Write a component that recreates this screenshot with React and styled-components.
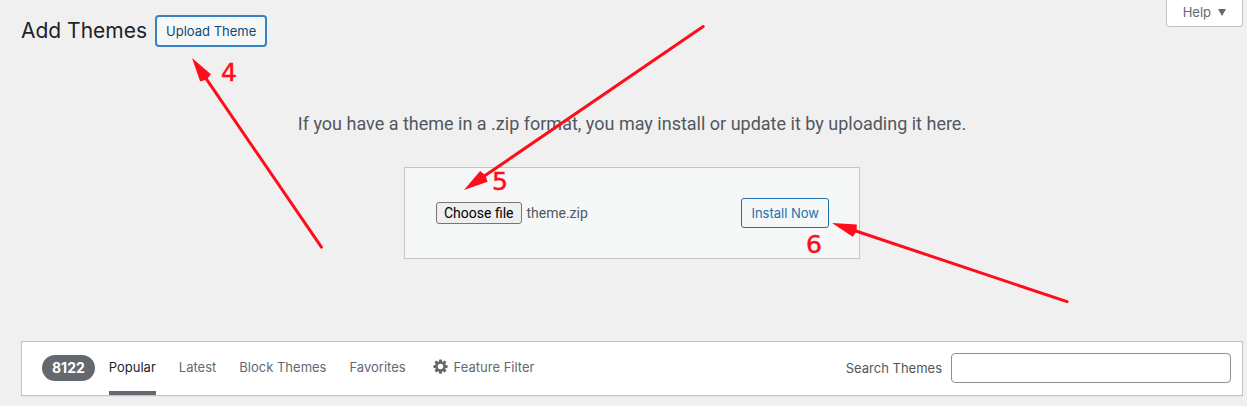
import React, { useRef, useState } from "react";
import styled, { createGlobalStyle, css } from "styled-components";

const GlobalStyle = createGlobalStyle`
  *, *::before, *::after { box-sizing: border-box; }
  body {
    margin: 0;
    background: #f0f0f1;
    color: #50575e;
    font-family: Inter, "Liberation Sans", sans-serif;
    font-size: 13px;
    line-height: 20px;
  }
  button, input { font: inherit; }
`;

const Page = styled.main`
  padding: 0 4px 10px 21px;
`;

const TopBar = styled.header`
  display: flex;
  justify-content: space-between;
  align-items: flex-start;
`;

const TitleRow = styled.div`
  display: flex;
  align-items: center;
  gap: 8px;
  padding-top: 15px;
`;

const Title = styled.h1`
  margin: 0;
  color: #1d2327;
  font-size: 21px;
  font-weight: 400;
  line-height: 32px;
`;

const HelpButton = styled.button`
  display: flex;
  align-items: center;
  gap: 7px;
  height: 27px;
  padding: 0 16px 2px;
  border: 1px solid #c3c4c7;
  border-top: 0;
  border-radius: 0 0 4px 4px;
  background: #fff;
  color: #646970;
`;

const Caret = styled.span`
  border: 4px solid transparent;
  border-top: 7px solid #646970;
  border-bottom: 0;
`;

const ActionButton = styled.button`
  height: 30px;
  padding: 0 9px;
  border: 1px solid #2271b1;
  border-radius: 3px;
  background: #f6f7f7;
  color: #2271b1;
  white-space: nowrap;
  ${(p) =>
    p.$active &&
    css`
      height: 32px;
      border: 2px solid #3582c4;
      border-radius: 4px;
      color: #0a4b78;
    `}
`;

const Anchor = styled.div`
  position: relative;
  display: flex;
`;

const CalloutArt = styled.svg`
  position: absolute;
  z-index: 1;
  top: ${(p) => p.$top}px;
  left: ${(p) => p.$left}px;
  overflow: visible;
  pointer-events: none;
  fill: #ff0d1b;
  stroke: #ff0d1b;
  line {
    stroke-width: 3px;
    stroke-linecap: round;
  }
  polygon { stroke: none; }
  text {
    stroke-width: 0.5;
    font-family: "DejaVu Sans", sans-serif;
    font-size: 25px;
  }
`;

const UploadPanel = styled.section`
  display: flex;
  flex-direction: column;
  align-items: center;
  padding: 64px 0 82px;
`;

const Message = styled.p`
  margin: 0;
  font-family: Roboto, "Liberation Sans", sans-serif;
  font-size: 18px;
  line-height: 26px;
  text-align: center;
`;

const UploadForm = styled.form`
  display: flex;
  align-items: center;
  justify-content: space-between;
  width: 100%;
  max-width: 456px;
  margin-top: 30px;
  padding: 30px 30px 30px 31px;
  border: 1px solid #c3c4c7;
  background: #f6f7f7;
`;

const FilePicker = styled.div`
  display: flex;
  align-items: center;
  gap: 5px;
  font-family: Roboto, "Liberation Sans", sans-serif;
  font-size: 14px;
`;

const FileButton = styled.button`
  height: 22px;
  padding: 0 7px;
  border: 1px solid #767676;
  border-radius: 3px;
  background: #efefef;
  color: #000;
  line-height: 20px;
`;

const FilterBar = styled.div`
  display: flex;
  align-items: center;
  justify-content: space-between;
  height: 55px;
  padding: 0 11px 0 20px;
  border: 1px solid #c3c4c7;
  background: #fff;
  box-shadow: 0 1px 1px rgba(0, 0, 0, 0.04);
`;

const Filters = styled.nav`
  display: flex;
  align-items: center;
  align-self: stretch;
  gap: 23px;
`;

const Count = styled.span`
  margin: 0 -9px 2px 0;
  padding: 3px 10px;
  border-radius: 13px;
  background: #646970;
  color: #fff;
  font-size: 14px;
  font-weight: 700;
`;

const FilterLink = styled.a`
  display: flex;
  align-items: center;
  align-self: stretch;
  border-bottom: 4px solid ${(p) => (p.$current ? "#646970" : "transparent")};
  color: ${(p) => (p.$current ? "#1d2327" : "#646970")};
  text-decoration: none;
  white-space: nowrap;
`;

const FeatureButton = styled.button`
  display: flex;
  align-items: center;
  gap: 6px;
  margin: 0 0 4px 4px;
  padding: 0;
  border: 0;
  background: none;
  color: #646970;
`;

const SearchLabel = styled.label`
  display: flex;
  align-items: center;
  gap: 9px;
  margin-bottom: 2px;
  white-space: nowrap;
`;

const SearchInput = styled.input`
  width: 280px;
  height: 30px;
  padding: 0 8px;
  border: 1px solid #8c8f94;
  border-radius: 4px;
  background: #fff;
`;

// The arrow's tip is the drawing's origin; the head is turned to follow the shaft.
function Callout({ top, left, tail, label, labelAt }) {
  const length = Math.hypot(tail[0], tail[1]);
  const angle = (Math.atan2(tail[1], tail[0]) * 180) / Math.PI;
  return (
    <CalloutArt $top={top} $left={left} width="1" height="1">
      <g transform={`rotate(${angle})`}>
        <line x1="22" y1="0" x2={length - 1} y2="0" />
        <polygon points="0,0 24,-6.5 26,0 24,6.5" />
      </g>
      <text x={labelAt[0]} y={labelAt[1]}>{label}</text>
    </CalloutArt>
  );
}

function GearIcon() {
  return (
    <svg width="15" height="15" viewBox="0 0 16 16" aria-hidden="true">
      <g fill="currentColor">
        {[0, 45, 90, 135].map((turn) => (
          <rect key={turn} x="6.4" y="0.4" width="3.2" height="15.2" rx="0.7" transform={`rotate(${turn} 8 8)`} />
        ))}
        <circle cx="8" cy="8" r="5.7" />
      </g>
      <circle cx="8" cy="8" r="2.9" fill="#fff" />
    </svg>
  );
}

const FILTERS = ["Popular", "Latest", "Block Themes", "Favorites"];

export default function App() {
  const fileInput = useRef(null);
  const [fileName, setFileName] = useState("theme.zip");
  const [current, setCurrent] = useState("Popular");

  return (
    <>
      <GlobalStyle />
      <Page>
        <TopBar>
          <TitleRow>
            <Title>Add Themes</Title>
            <Anchor>
              <ActionButton type="button" $active>Upload Theme</ActionButton>
              <Callout top={43} left={37} tail={[130, 190]} label="4" labelAt={[29, 23]} />
            </Anchor>
          </TitleRow>
          <HelpButton type="button">
            Help <Caret />
          </HelpButton>
        </TopBar>

        <UploadPanel>
          <Message>
            If you have a theme in a .zip format, you may install or update it by uploading it here.
          </Message>
          <UploadForm onSubmit={(e) => e.preventDefault()}>
            <FilePicker>
              <Anchor>
                <FileButton type="button" onClick={() => fileInput.current.click()}>
                  Choose file
                </FileButton>
                <Callout top={-12} left={28} tail={[240, -164]} label="5" labelAt={[28, 0]} />
              </Anchor>
              <input
                ref={fileInput}
                type="file"
                accept=".zip"
                aria-label="Theme zip file"
                hidden
                onChange={(e) => setFileName(e.target.files[0]?.name ?? "")}
              />
              <span>{fileName}</span>
            </FilePicker>
            <Anchor>
              <ActionButton type="submit">Install Now</ActionButton>
              <Callout top={25} left={91} tail={[236, 79]} label="6" labelAt={[-26, 30]} />
            </Anchor>
          </UploadForm>
        </UploadPanel>

        <FilterBar>
          <Filters>
            <Count>8122</Count>
            {FILTERS.map((name) => (
              <FilterLink key={name} href="#" $current={name === current} onClick={() => setCurrent(name)}>
                {name}
              </FilterLink>
            ))}
            <FeatureButton type="button">
              <GearIcon />
              Feature Filter
            </FeatureButton>
          </Filters>
          <SearchLabel>
            Search Themes
            <SearchInput type="search" />
          </SearchLabel>
        </FilterBar>
      </Page>
    </>
  );
}
